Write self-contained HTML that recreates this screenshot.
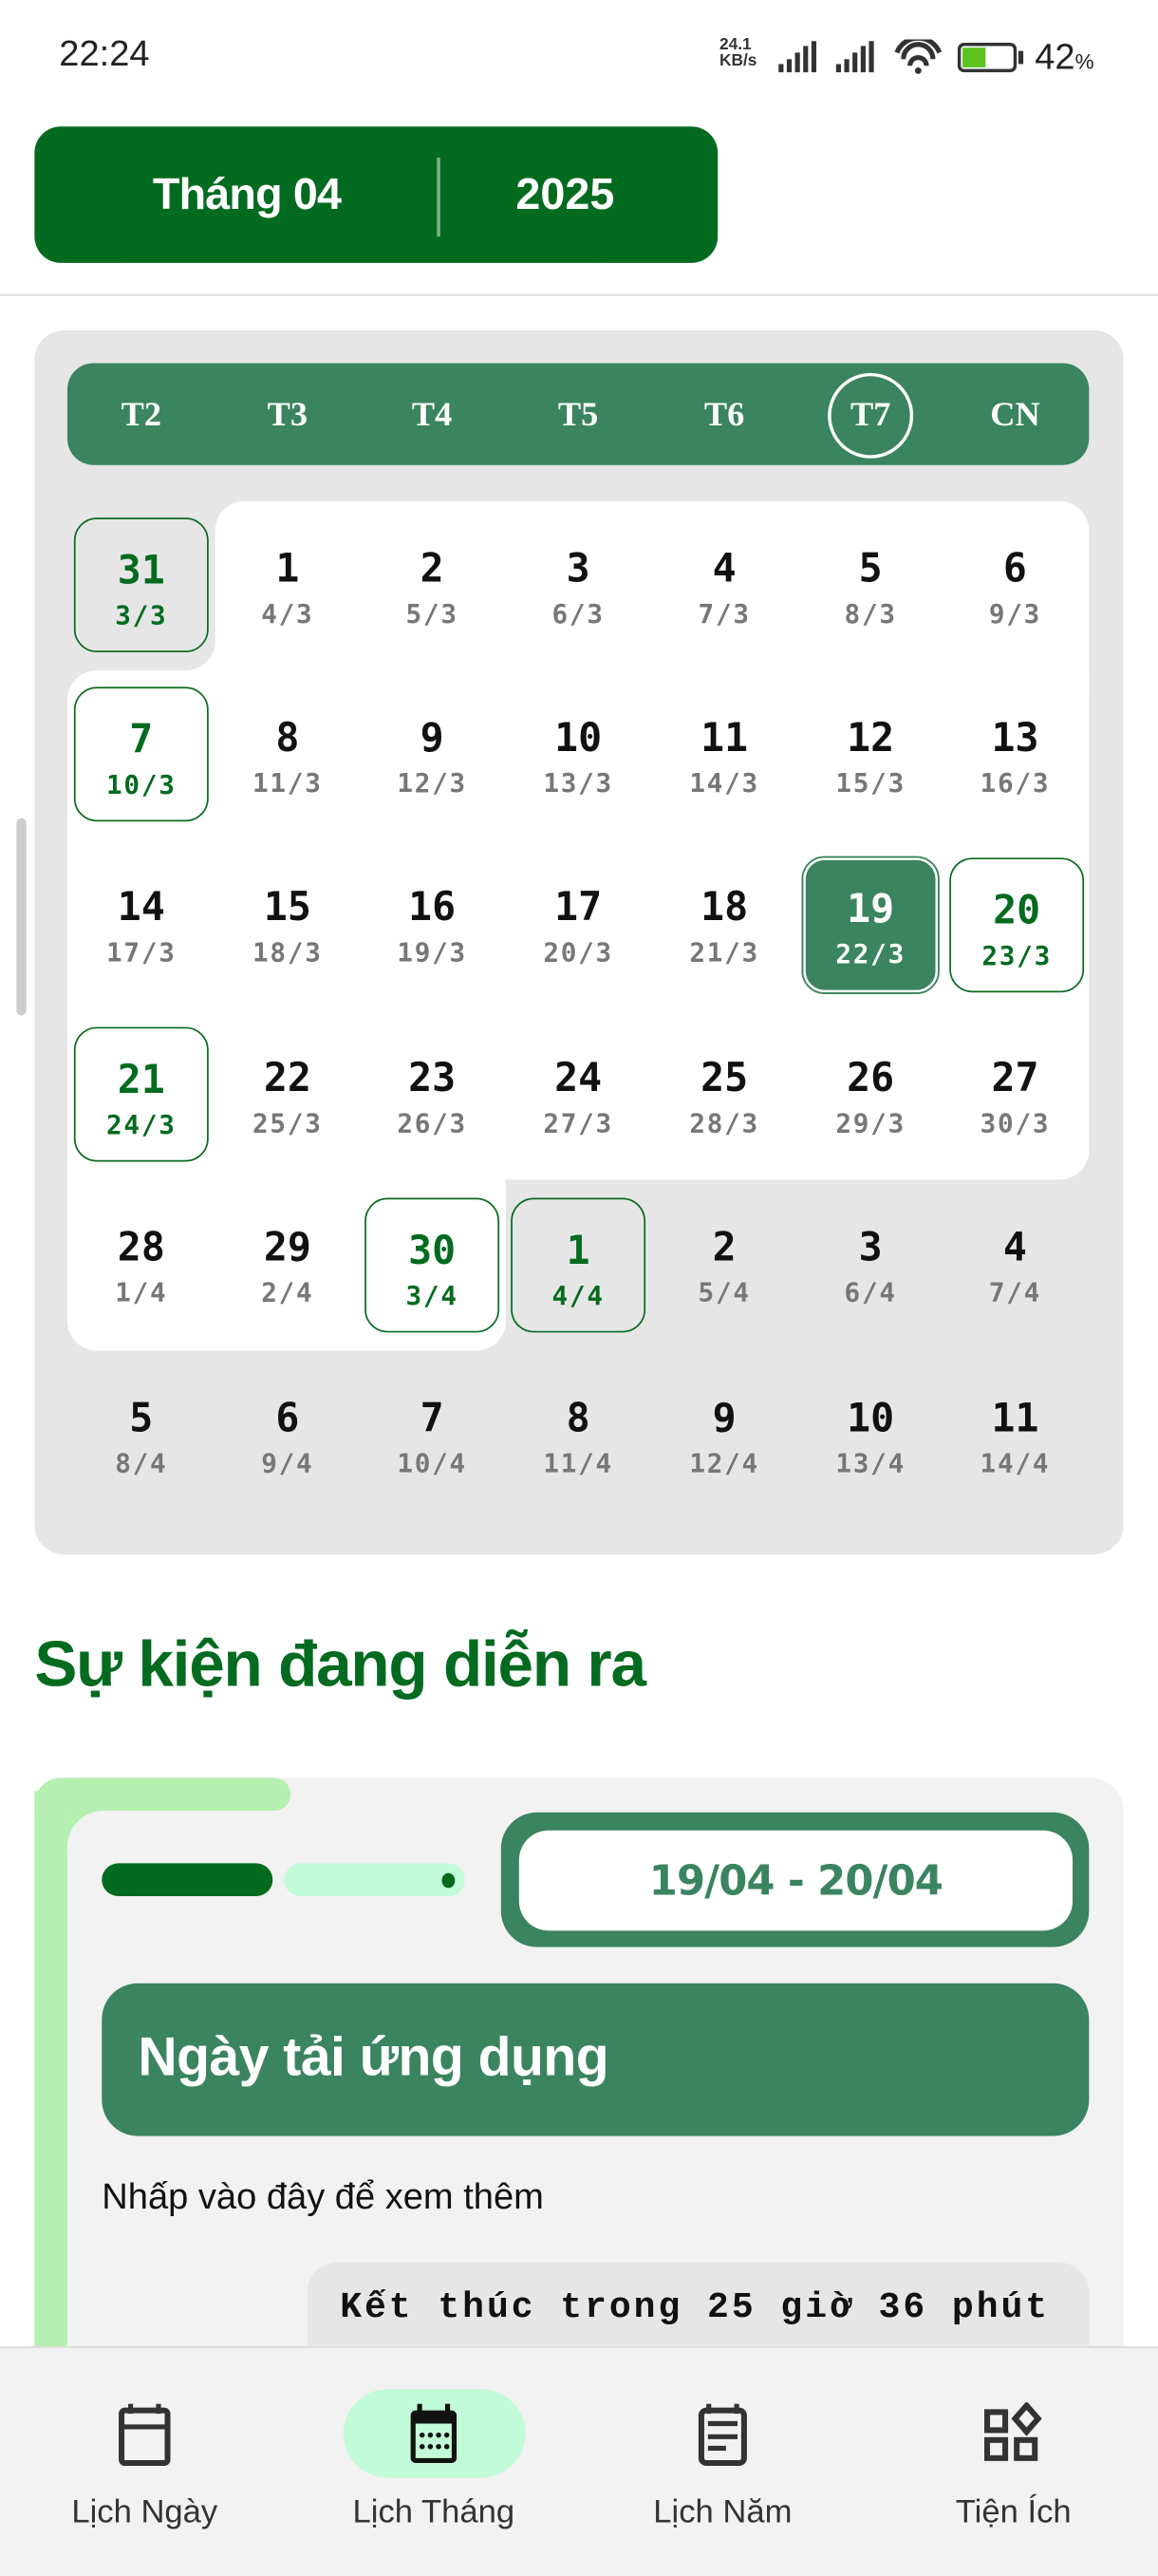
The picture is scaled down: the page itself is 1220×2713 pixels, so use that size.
<!DOCTYPE html>
<html><head><meta charset="utf-8">
<style>
*{margin:0;padding:0;box-sizing:border-box}
html,body{width:1220px;height:2712px;overflow:hidden;background:#fff}
#s{position:absolute;left:0;top:0;width:705px;height:1568px;transform:scale(1.73050);transform-origin:0 0;font-family:"Liberation Sans",sans-serif}
.a{position:absolute}
.c{position:absolute;width:82px;height:82px;border-radius:14px}
.c .n{position:absolute;left:0;right:0;top:16px;height:30px;text-align:center;font:bold 24px "DejaVu Sans Mono",monospace;line-height:30px;color:#111}
.c .l{position:absolute;left:0;right:0;top:49px;height:20px;text-align:center;font:bold 16px "DejaVu Sans Mono",monospace;line-height:20px;color:#777;letter-spacing:1px}
.c.b{border:1.2px solid #0a6b1f}
.c.b .n,.c.b .l{color:#036b1f}
.c.sel{background:#3a845f;border:1.5px solid #3a845f;box-shadow:inset 0 0 0 1.5px #fff, inset 0 0 0 3px #3a845f}
.c.sel .n,.c.sel .l{color:#fff}
.wd{position:absolute;top:221px;width:60px;text-align:center;height:62px;color:#fff;font:bold 21px "Liberation Serif",serif;line-height:62px}
.nav{position:absolute;top:1518px;width:176px;text-align:center;font-size:20px;color:#333}
</style></head><body><div id="s">
<!-- status bar -->
<div class="a" style="left:36px;top:20px;font-size:22px;color:#222">22:24</div>
<div class="a" style="left:438px;top:23px;font-size:10px;line-height:10px;font-weight:bold;color:#333">24.1<br>KB/s</div>
<svg class="a" style="left:472px;top:24px" width="110" height="22" viewBox="0 0 110 22">
<g fill="#333"><rect x="2" y="15" width="3" height="5"/><rect x="7" y="12" width="3" height="8"/><rect x="12" y="8" width="3" height="12"/><rect x="17" y="4" width="3" height="16"/><rect x="22" y="1" width="3" height="19"/>
<rect x="37" y="15" width="3" height="5"/><rect x="42" y="12" width="3" height="8"/><rect x="47" y="8" width="3" height="12"/><rect x="52" y="4" width="3" height="16"/><rect x="57" y="1" width="3" height="19"/></g>
<path d="M74 8 A14 14 0 0 1 100 8 M78 12 A9 9 0 0 1 96 12 M82 16 A4 4 0 0 1 92 16" stroke="#333" stroke-width="3" fill="none"/><circle cx="87" cy="19" r="2" fill="#333"/>
</svg>
<div class="a" style="left:583px;top:26px;width:36px;height:18px;border:2px solid #333;border-radius:4px"><div style="width:14px;height:12px;margin:1px;background:#5dc21e"></div></div>
<div class="a" style="left:620px;top:31px;width:3px;height:8px;background:#333"></div>
<div class="a" style="left:630px;top:22px;font-size:22px;color:#222">42<span style="font-size:13px">%</span></div>

<!-- header -->
<div class="a" style="left:21px;top:77px;width:416px;height:83px;background:#036b1f;border-radius:16px"></div>
<div class="a" style="left:93px;top:103px;font-size:27px;font-weight:bold;color:#fff;letter-spacing:-0.5px">Tháng 04</div>
<div class="a" style="left:266px;top:96px;width:2px;height:48px;background:#7cb58a"></div>
<div class="a" style="left:314px;top:103px;font-size:27px;font-weight:bold;color:#fff">2025</div>
<div class="a" style="left:0;top:179px;width:705px;height:1px;background:#d8d8d8"></div>
<div class="a" style="left:10px;top:498px;width:6px;height:120px;background:#ccc;border-radius:3px"></div>

<!-- calendar -->
<div class="a" style="left:21px;top:201px;width:663px;height:745px;background:#e6e6e6;border-radius:18px"></div>
<div class="a" style="left:41px;top:221px;width:622px;height:62px;background:#3a845f;border-radius:16px"></div>
<div class="wd" style="left:56px">T2</div><div class="wd" style="left:145px">T3</div><div class="wd" style="left:233px">T4</div><div class="wd" style="left:322px">T5</div><div class="wd" style="left:411px">T6</div><div class="wd" style="left:500px">T7</div><div class="wd" style="left:588px">CN</div>
<div class="a" style="left:504px;top:227px;width:52px;height:52px;border:2px solid #fff;border-radius:50%"></div>
<!-- white region -->
<div class="a" style="left:131px;top:305px;width:532px;height:120px;background:#fff;border-radius:18px 18px 0 0"></div>
<div class="a" style="left:41px;top:408px;width:622px;height:310px;background:#fff;border-radius:18px 0 18px 0"></div>
<div class="a" style="left:41px;top:700px;width:267px;height:122px;background:#fff;border-radius:0 0 18px 18px"></div>
<div class="a" style="left:113px;top:390px;width:18px;height:18px;background:#fff"></div>
<div class="a" style="left:113px;top:390px;width:18px;height:18px;background:#e6e6e6;border-radius:0 0 18px 0"></div>
<div class="a" style="left:308px;top:700px;width:18px;height:18px;background:#fff"></div>
<div class="a" style="left:308px;top:718px;width:18px;height:18px;background:#e6e6e6;border-radius:18px 0 0 0"></div>
<div class="a" style="left:308px;top:718px;width:355px;height:30px;background:#e6e6e6;border-radius:18px 0 0 0"></div>

<div class="c b" style="left:45px;top:315px;background:#e6e6e6"><div class="n">31</div><div class="l">3/3</div></div>
<div class="c" style="left:134px;top:315px"><div class="n">1</div><div class="l">4/3</div></div>
<div class="c" style="left:222px;top:315px"><div class="n">2</div><div class="l">5/3</div></div>
<div class="c" style="left:311px;top:315px"><div class="n">3</div><div class="l">6/3</div></div>
<div class="c" style="left:400px;top:315px"><div class="n">4</div><div class="l">7/3</div></div>
<div class="c" style="left:489px;top:315px"><div class="n">5</div><div class="l">8/3</div></div>
<div class="c" style="left:577px;top:315px"><div class="n">6</div><div class="l">9/3</div></div>

<div class="c b" style="left:45px;top:418px"><div class="n">7</div><div class="l">10/3</div></div>
<div class="c" style="left:134px;top:418px"><div class="n">8</div><div class="l">11/3</div></div>
<div class="c" style="left:222px;top:418px"><div class="n">9</div><div class="l">12/3</div></div>
<div class="c" style="left:311px;top:418px"><div class="n">10</div><div class="l">13/3</div></div>
<div class="c" style="left:400px;top:418px"><div class="n">11</div><div class="l">14/3</div></div>
<div class="c" style="left:489px;top:418px"><div class="n">12</div><div class="l">15/3</div></div>
<div class="c" style="left:577px;top:418px"><div class="n">13</div><div class="l">16/3</div></div>

<div class="c" style="left:45px;top:521px"><div class="n">14</div><div class="l">17/3</div></div>
<div class="c" style="left:134px;top:521px"><div class="n">15</div><div class="l">18/3</div></div>
<div class="c" style="left:222px;top:521px"><div class="n">16</div><div class="l">19/3</div></div>
<div class="c" style="left:311px;top:521px"><div class="n">17</div><div class="l">20/3</div></div>
<div class="c" style="left:400px;top:521px"><div class="n">18</div><div class="l">21/3</div></div>
<div class="c sel" style="left:488px;top:521px;width:84px;height:84px"><div class="n">19</div><div class="l">22/3</div></div>
<div class="c b" style="left:578px;top:522px"><div class="n">20</div><div class="l">23/3</div></div>

<div class="c b" style="left:45px;top:625px"><div class="n">21</div><div class="l">24/3</div></div>
<div class="c" style="left:134px;top:625px"><div class="n">22</div><div class="l">25/3</div></div>
<div class="c" style="left:222px;top:625px"><div class="n">23</div><div class="l">26/3</div></div>
<div class="c" style="left:311px;top:625px"><div class="n">24</div><div class="l">27/3</div></div>
<div class="c" style="left:400px;top:625px"><div class="n">25</div><div class="l">28/3</div></div>
<div class="c" style="left:489px;top:625px"><div class="n">26</div><div class="l">29/3</div></div>
<div class="c" style="left:577px;top:625px"><div class="n">27</div><div class="l">30/3</div></div>

<div class="c" style="left:45px;top:728px"><div class="n">28</div><div class="l">1/4</div></div>
<div class="c" style="left:134px;top:728px"><div class="n">29</div><div class="l">2/4</div></div>
<div class="c b" style="left:222px;top:729px;background:#fff"><div class="n">30</div><div class="l">3/4</div></div>
<div class="c b" style="left:311px;top:729px;background:#e6e6e6"><div class="n">1</div><div class="l">4/4</div></div>
<div class="c" style="left:400px;top:728px"><div class="n">2</div><div class="l">5/4</div></div>
<div class="c" style="left:489px;top:728px"><div class="n">3</div><div class="l">6/4</div></div>
<div class="c" style="left:577px;top:728px"><div class="n">4</div><div class="l">7/4</div></div>

<div class="c" style="left:45px;top:832px"><div class="n">5</div><div class="l">8/4</div></div>
<div class="c" style="left:134px;top:832px"><div class="n">6</div><div class="l">9/4</div></div>
<div class="c" style="left:222px;top:832px"><div class="n">7</div><div class="l">10/4</div></div>
<div class="c" style="left:311px;top:832px"><div class="n">8</div><div class="l">11/4</div></div>
<div class="c" style="left:400px;top:832px"><div class="n">9</div><div class="l">12/4</div></div>
<div class="c" style="left:489px;top:832px"><div class="n">10</div><div class="l">13/4</div></div>
<div class="c" style="left:577px;top:832px"><div class="n">11</div><div class="l">14/4</div></div>

<!-- events -->
<div class="a" style="left:21px;top:992px;font-size:39px;font-weight:bold;color:#036b1f;letter-spacing:-0.7px">Sự kiện đang diễn ra</div>
<div class="a" style="left:21px;top:1082px;width:663px;height:400px;background:#f2f2f2;border-radius:20px 20px 0 0"></div>
<div class="a" style="left:21px;top:1082px;width:156px;height:20px;background:#b6f0b1;border-radius:16px 10px 10px 0"></div>
<div class="a" style="left:21px;top:1090px;width:20px;height:400px;background:#b6f0b1"></div>
<div class="a" style="left:41px;top:1102px;width:24px;height:24px;background:#b6f0b1"></div>
<div class="a" style="left:41px;top:1102px;width:24px;height:24px;background:#f2f2f2;border-radius:22px 0 0 0"></div>
<div class="a" style="left:62px;top:1134px;width:104px;height:20px;background:#036b1f;border-radius:10px"></div>
<div class="a" style="left:173px;top:1134px;width:110px;height:20px;background:#c2fbd8;border-radius:10px"></div>
<div class="a" style="left:269px;top:1140px;width:8px;height:9px;background:#036b1f;border-radius:50%"></div>
<div class="a" style="left:305px;top:1103px;width:358px;height:82px;background:#3a845f;border-radius:22px"></div>
<div class="a" style="left:316px;top:1114px;width:337px;height:61px;background:#fff;border-radius:18px;text-align:center;font:bold 25px 'DejaVu Sans',sans-serif;line-height:61px;color:#3a845f;letter-spacing:-0.5px">19/04 - 20/04</div>
<div class="a" style="left:62px;top:1207px;width:601px;height:93px;background:#3a845f;border-radius:22px"></div>
<div class="a" style="left:84px;top:1233px;font-size:33px;font-weight:bold;color:#fff;letter-spacing:-0.3px">Ngày tải ứng dụng</div>
<div class="a" style="left:62px;top:1324px;font-size:22px;color:#111">Nhấp vào đây để xem thêm</div>
<div class="a" style="left:187px;top:1377px;width:476px;height:70px;background:#e6e6e6;border-radius:18px"></div>
<div class="a" style="left:207px;top:1392px;font:bold 22px 'Liberation Mono',monospace;letter-spacing:1.7px;color:#111">Kết thúc trong 25 giờ 36 phút</div>

<!-- bottom nav -->
<div class="a" style="left:0;top:1428px;width:705px;height:140px;background:#f2f2f2;border-top:1px solid #ddd"></div>
<div class="a" style="left:209px;top:1454px;width:111px;height:54px;background:#c2fbd8;border-radius:27px"></div>
<svg class="a" style="left:70px;top:1462px" width="36" height="40" viewBox="0 0 36 40"><rect x="4" y="5" width="28" height="32" rx="2" fill="none" stroke="#333" stroke-width="3.5"/><line x1="4" y1="15" x2="32" y2="15" stroke="#333" stroke-width="3"/><rect x="8" y="1" width="3" height="6" fill="#333"/><rect x="25" y="1" width="3" height="6" fill="#333"/></svg>
<svg class="a" style="left:246px;top:1462px" width="36" height="40" viewBox="0 0 36 40"><rect x="4" y="5" width="28" height="32" rx="3" fill="#111"/><rect x="7" y="13" width="22" height="21" fill="#c2fbd8"/><rect x="8" y="1" width="3" height="6" fill="#111"/><rect x="25" y="1" width="3" height="6" fill="#111"/><g fill="#111"><circle cx="11" cy="20" r="1.6"/><circle cx="16" cy="20" r="1.6"/><circle cx="21" cy="20" r="1.6"/><circle cx="26" cy="20" r="1.6"/><circle cx="11" cy="27" r="1.6"/><circle cx="16" cy="27" r="1.6"/><circle cx="21" cy="27" r="1.6"/><circle cx="26" cy="27" r="1.6"/></g></svg>
<svg class="a" style="left:422px;top:1462px" width="36" height="40" viewBox="0 0 36 40"><rect x="5" y="5" width="26" height="32" rx="3" fill="none" stroke="#333" stroke-width="3.5"/><rect x="8" y="1" width="3" height="6" fill="#333"/><rect x="25" y="1" width="3" height="6" fill="#333"/><line x1="9" y1="13" x2="27" y2="13" stroke="#333" stroke-width="3"/><line x1="9" y1="21" x2="27" y2="21" stroke="#333" stroke-width="3"/><line x1="9" y1="28" x2="20" y2="28" stroke="#333" stroke-width="3"/></svg>
<svg class="a" style="left:598px;top:1462px" width="40" height="40" viewBox="0 0 40 40"><g fill="none" stroke="#333" stroke-width="3.5"><rect x="3" y="6" width="11" height="11"/><rect x="3" y="23" width="11" height="11"/><rect x="21" y="23" width="11" height="11"/><path d="M27 2 L34 10 L27 18 L20 10 Z"/></g></svg>
<div class="nav" style="left:0">Lịch Ngày</div>
<div class="nav" style="left:176px">Lịch Tháng</div>
<div class="nav" style="left:352px">Lịch Năm</div>
<div class="nav" style="left:529px">Tiện Ích</div>
</div></body></html>
